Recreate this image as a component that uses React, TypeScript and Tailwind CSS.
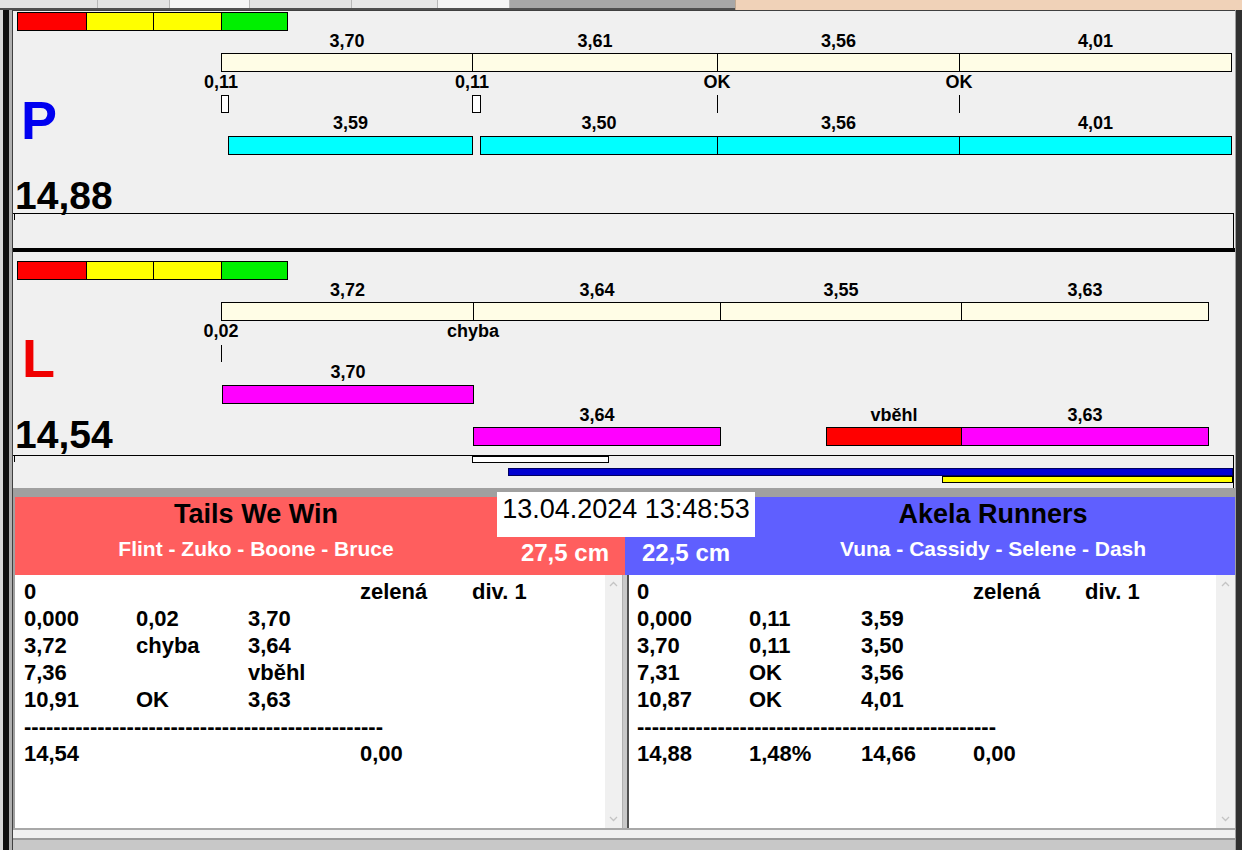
import React from "react";

const SCALE = 67.85;
const X0 = 208; // canvas-relative x of t=0
const px = (t: number) => Math.round(X0 + SCALE * t);

type Seg = { a: number; b: number; color: string; label?: string };

function Segments({ segs, top, labelTop }: { segs: Seg[]; top: number; labelTop: number }) {
  return (
    <>
      {segs.map((s, i) => {
        const l = px(s.a);
        const w = px(s.b) - l + 1;
        return (
          <React.Fragment key={i}>
            {s.label && (
              <div
                className="absolute text-center text-[18px] font-bold leading-[20px] text-black whitespace-nowrap"
                style={{ left: l, width: w, top: labelTop }}
              >
                {s.label}
              </div>
            )}
            <div
              className="absolute h-[19px] border border-black"
              style={{ left: l, width: w, top, background: s.color }}
            />
          </React.Fragment>
        );
      })}
    </>
  );
}

function Reaction({ t, label, top }: { t: number; label: string; top: number }) {
  return (
    <div
      className="absolute w-[100px] text-center text-[18px] font-bold leading-[20px] text-black"
      style={{ left: px(t) - 50, top }}
    >
      {label}
    </div>
  );
}

function ColorBar({ top }: { top: number }) {
  return (
    <div className="absolute left-[4px] flex" style={{ top }}>
      <div className="h-[19px] w-[70px] border border-black bg-[#ff0000]" />
      <div className="-ml-px h-[19px] w-[68px] border border-black bg-[#ffff00]" />
      <div className="-ml-px h-[19px] w-[69px] border border-black bg-[#ffff00]" />
      <div className="-ml-px h-[19px] w-[67px] border border-black bg-[#00f000]" />
    </div>
  );
}

const CREAM = "#fffde6";

function PCanvas() {
  const top: Seg[] = [
    { a: 0, b: 3.7, color: CREAM, label: "3,70" },
    { a: 3.7, b: 7.31, color: CREAM, label: "3,61" },
    { a: 7.31, b: 10.87, color: CREAM, label: "3,56" },
    { a: 10.87, b: 14.88, color: CREAM, label: "4,01" },
  ];
  const cyan: Seg[] = [
    { a: 0.11, b: 3.7, color: "#00ffff", label: "3,59" },
    { a: 3.81, b: 7.31, color: "#00ffff", label: "3,50" },
    { a: 7.31, b: 10.87, color: "#00ffff", label: "3,56" },
    { a: 10.87, b: 14.88, color: "#00ffff", label: "4,01" },
  ];
  return (
    <div className="relative h-[238px] border-t border-[#404040] bg-[#f0f0f0]">
      <ColorBar top={1} />
      <Segments segs={top} top={42} labelTop={20} />
      <Reaction t={0} label="0,11" top={61} />
      <Reaction t={3.7} label="0,11" top={61} />
      <Reaction t={7.31} label="OK" top={61} />
      <Reaction t={10.87} label="OK" top={61} />
      {/* reaction markers */}
      <div className="absolute top-[84px] h-[18px] border border-black bg-white" style={{ left: px(0), width: px(0.11) - px(0) + 1 }} />
      <div className="absolute top-[84px] h-[18px] border border-black bg-white" style={{ left: px(3.7), width: px(3.81) - px(3.7) + 1 }} />
      <div className="absolute top-[84px] h-[18px] w-px bg-black" style={{ left: px(7.31) }} />
      <div className="absolute top-[84px] h-[18px] w-px bg-black" style={{ left: px(10.87) }} />
      <Segments segs={cyan} top={125} labelTop={102} />
      <div className="absolute left-[8px] top-[82px] text-[54px] font-bold leading-none text-[#0000f0]">P</div>
      <div className="absolute left-[2px] top-[165px] text-[39px] font-bold leading-none text-black">14,88</div>
      <div className="absolute left-0 top-[202px] h-[35px] w-[1221px] border-t border-r border-black" />
      <div className="absolute left-[1px] top-[202px] h-[7px] w-px bg-black" />
    </div>
  );
}

function LCanvas() {
  const top: Seg[] = [
    { a: 0, b: 3.72, color: CREAM, label: "3,72" },
    { a: 3.72, b: 7.36, color: CREAM, label: "3,64" },
    { a: 7.36, b: 10.91, color: CREAM, label: "3,55" },
    { a: 10.91, b: 14.54, color: CREAM, label: "3,63" },
  ];
  const row2: Seg[] = [{ a: 0.02, b: 3.72, color: "#ff00ff", label: "3,70" }];
  const row3: Seg[] = [
    { a: 3.72, b: 7.36, color: "#ff00ff", label: "3,64" },
    { a: 8.91, b: 10.91, color: "#ff0000", label: "vběhl" },
    { a: 10.91, b: 14.54, color: "#ff00ff", label: "3,63" },
  ];
  return (
    <div className="relative h-[236px] bg-[#f0f0f0]">
      <ColorBar top={9} />
      <Segments segs={top} top={50} labelTop={28} />
      <Reaction t={0} label="0,02" top={69} />
      <Reaction t={3.72} label="chyba" top={69} />
      <div className="absolute top-[93px] h-[17px] w-px bg-black" style={{ left: px(0) }} />
      <Segments segs={row2} top={133} labelTop={110} />
      <Segments segs={row3} top={175} labelTop={153} />
      <div className="absolute left-[9px] top-[79px] text-[54px] font-bold leading-none text-[#f00000]">L</div>
      <div className="absolute left-[2px] top-[163px] text-[39px] font-bold leading-none text-black">14,54</div>
      <div className="absolute left-0 top-[203px] h-[33px] w-[1221px] border-t border-r border-black" />
      <div className="absolute left-[1px] top-[203px] h-[7px] w-px bg-black" />
      <div className="absolute left-[459px] top-[204px] h-[7px] w-[137px] border border-black bg-white" />
      <div className="absolute left-[495px] top-[216px] h-[8px] w-[725px] border border-[#000060] bg-[#0000d0]" />
      <div className="absolute left-[929px] top-[224px] h-[7px] w-[291px] border border-black bg-[#ffff00]" />
    </div>
  );
}

function ScrollBar({ w }: { w: string }) {
  return (
    <div className={`flex h-full flex-col items-center justify-between bg-[#f0f0f0] py-[6px] ${w}`}>
      <svg width="9" height="6" viewBox="0 0 9 6">
        <path d="M1 5 L4.5 1.5 L8 5" fill="none" stroke="#c4c4c4" strokeWidth="1.3" />
      </svg>
      <svg width="9" height="6" viewBox="0 0 9 6">
        <path d="M1 1 L4.5 4.5 L8 1" fill="none" stroke="#c4c4c4" strokeWidth="1.3" />
      </svg>
    </div>
  );
}

const DASHES = "-".repeat(49);

function ListBox({ rows, w, pl }: { rows: string[][]; w: string; pl: string }) {
  return (
    <div className={`h-full bg-white pt-[3px] ${w} ${pl}`}>
      {rows.map((r, i) =>
        r.length === 1 && r[0] === "dash" ? (
          <div key={i} className="h-[27px] text-[22px] font-bold leading-[27px] whitespace-nowrap text-black">
            {DASHES}
          </div>
        ) : (
          <div key={i} className="grid h-[27px] grid-cols-[112px_112px_112px_112px_112px] text-[22px] font-bold leading-[27px] text-black">
            {r.map((c, j) => (
              <div key={j} className="whitespace-nowrap">
                {c}
              </div>
            ))}
          </div>
        )
      )}
    </div>
  );
}

const leftRows = [
  ["0", "", "", "zelená", "div. 1"],
  ["0,000", "0,02", "3,70", "", ""],
  ["3,72", "chyba", "3,64", "", ""],
  ["7,36", "", "vběhl", "", ""],
  ["10,91", "OK", "3,63", "", ""],
  ["dash"],
  ["14,54", "", "", "0,00", ""],
];

const rightRows = [
  ["0", "", "", "zelená", "div. 1"],
  ["0,000", "0,11", "3,59", "", ""],
  ["3,70", "0,11", "3,50", "", ""],
  ["7,31", "OK", "3,56", "", ""],
  ["10,87", "OK", "4,01", "", ""],
  ["dash"],
  ["14,88", "1,48%", "14,66", "0,00", ""],
];

function Bottom() {
  return (
    <div className="relative flex flex-col bg-[#a0a0a0]">
      <div className="h-[9px]" />
      {/* headers */}
      <div className="flex h-[78px] pl-[2px]">
        <div className="flex w-[610px] flex-col bg-[#ff5e5e] pt-[1px]">
          <div className="w-[482px] text-center text-[27px] font-bold leading-[32px] text-black">Tails We Win</div>
          <div className="mt-[7px] grid grid-cols-[482px_128px] items-start">
            <div className="text-center text-[21px] font-bold leading-[24px] text-white whitespace-nowrap">
              Flint - Zuko - Boone - Bruce
            </div>
            <div className="-mt-[2px] pr-[16px] text-right text-[24px] font-bold leading-[28px] text-white whitespace-nowrap">
              <span className="relative top-[4px]">27,5 cm</span>
            </div>
          </div>
        </div>
        <div className="flex w-[610px] flex-col bg-[#5f5fff] pt-[1px]">
          <div className="ml-[130px] w-[476px] text-center text-[27px] font-bold leading-[32px] text-black">Akela Runners</div>
          <div className="mt-[7px] grid grid-cols-[130px_476px] items-start">
            <div className="pl-[17px] text-[24px] font-bold leading-[28px] text-white whitespace-nowrap">
              <span className="relative top-[2px]">22,5 cm</span>
            </div>
            <div className="text-center text-[21px] font-bold leading-[24px] text-white whitespace-nowrap">
              Vuna - Cassidy - Selene - Dash
            </div>
          </div>
        </div>
      </div>
      {/* lists */}
      <div className="flex h-[253px] pl-[2px]">
        <ListBox rows={leftRows} w="w-[590px]" pl="pl-[9px]" />
        <ScrollBar w="w-[17px]" />
        <div className="h-full w-[7px] border-l border-r-2 border-l-[#b0b0b0] border-r-[#505050] bg-[#c8c8c8]" />
        <ListBox rows={rightRows} w="w-[587px]" pl="pl-[8px]" />
        <ScrollBar w="w-[19px]" />
      </div>
      {/* status */}
      <div className="flex h-[22px] flex-col">
        <div className="h-[10px] border-t-2 border-[#a8a8a8] bg-[#f0f0f0]" />
        <div className="h-[12px] border-t-2 border-[#9a9a9a] bg-[#c8c8c8]" />
      </div>
      {/* date overlay */}
      <div className="absolute left-[484px] top-[4px] h-[45px] w-[258px] bg-white pt-[2px] text-center text-[27px] leading-[30px] text-black whitespace-nowrap">
        13.04.2024 13:48:53
      </div>
    </div>
  );
}

function TopStrip() {
  return (
    <div className="flex h-[10px] w-[1242px]">
      <div className="flex h-full w-[735px] flex-col">
        <div className="flex h-[8px]">
          <div className="h-full w-[98px] border-r border-[#b8b8b8] bg-[#e4e4e4]" />
          <div className="h-full w-[72px] border-r border-[#b8b8b8] bg-[#e4e4e4]" />
          <div className="h-full w-[80px] border-r border-[#b8b8b8] bg-[#f4f4f4]" />
          <div className="h-full w-[102px] border-r border-[#b8b8b8] bg-[#e4e4e4]" />
          <div className="h-full w-[86px] border-r border-[#b8b8b8] bg-[#e8e8e8]" />
          <div className="h-full w-[72px] border-r border-[#b8b8b8] bg-[#f4f4f4]" />
          <div className="h-full flex-1 bg-[#a8a8a8]" />
        </div>
        <div className="h-[2px] bg-[#505050]" />
      </div>
      <div className="h-[11px] flex-1 border-l border-[#c0a890] bg-[#f0d2b8]" />
    </div>
  );
}

export default function App() {
  return (
    <div className="flex h-[850px] w-[1242px] flex-col overflow-hidden bg-[#f0f0f0] font-['Liberation_Sans',Arial,sans-serif]">
      <TopStrip />
      <div className="flex min-h-0 flex-1">
        <div className="flex h-full w-[13px] bg-[#c8c8c8]">
          <div className="w-[3px] bg-[#d8d8d8]" />
          <div className="w-[6px] bg-[#101010]" />
          <div className="w-[3px] bg-[#b0b0b0]" />
          <div className="w-px bg-[#404040]" />
        </div>
        <div className="flex w-[1222px] flex-col">
          <PCanvas />
          <div className="h-[4px] bg-black" />
          <LCanvas />
          <Bottom />
        </div>
        <div className="flex h-full w-[7px]">
          <div className="w-px bg-[#a0a0a0]" />
          <div className="flex-1 bg-[#303030]" />
        </div>
      </div>
    </div>
  );
}
